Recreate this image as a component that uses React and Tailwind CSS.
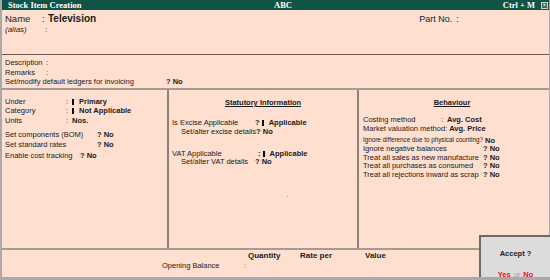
import React from "react";

const sans = { fontFamily: '"Liberation Sans", Arial, sans-serif' };

const Row = ({ label, sep, value, labelW, className = "" }) => (
  <div className={`flex items-center leading-none whitespace-nowrap ${className}`}>
    <span className={labelW}>{label}</span>
    <span className="w-[6px]">{sep}</span>
    <span className="font-bold">{value}</span>
  </div>
);

const Blk = () => <span className="inline-block w-[2px] h-[6px] bg-black mr-[5px] align-middle" />;

export default function App() {
  return (
    <div
      className="w-[550px] h-[280px] bg-[#a9a9a9] pl-[2px] pr-[1px] pb-[3px] flex flex-col relative text-[8px] text-[#1a1a1a] overflow-hidden"
      style={sans}
    >
      {/* title bar */}
      <div
        className="h-[10px] bg-[#0f5446] text-white font-bold text-[8.5px] flex items-center pl-[6px] pr-[1px] leading-none"
        style={{ fontFamily: '"Liberation Serif", "Times New Roman", serif' }}
      >
        <span className="w-[266px]">Stock Item Creation</span>
        <span className="flex-1">ABC</span>
        <span className="mr-[6px]">Ctrl + M</span>
        <span className="w-[7px] h-[7px] border border-[#cfcfcf] bg-[#3c6a5e] text-[6px] flex items-center justify-center">×</span>
      </div>

      <div className="flex-1 bg-[#fedfd0] flex flex-col">
        {/* name block */}
        <div className="h-[45px] border-b border-[#6e5a52] pl-[3px] pt-[4px]">
          <div className="flex items-center leading-none text-[9.5px]">
            <span className="w-[37px]">Name</span>
            <span className="w-[6px]">:</span>
            <span className="font-bold text-[10px]">Television</span>
            <span className="ml-[323px] text-[9px]">Part No.</span>
            <span className="ml-[4px]">:</span>
          </div>
          <div className="flex items-center leading-none mt-[2px] text-[8px]">
            <span className="w-[40px] italic">(alias)</span>
            <span>:</span>
          </div>
        </div>

        {/* description block */}
        <div className="h-[33px] pl-[3px] pt-[4px] flex flex-col gap-[2px] text-[7.5px]">
          <Row label="Description" sep=":" value="" labelW="w-[41px]" />
          <Row label="Remarks" sep=":" value="" labelW="w-[41px]" />
          <div className="flex items-center leading-none">
            <span className="w-[161px]">Set/modify default ledgers for invoicing</span>
            <span className="font-bold">? No</span>
          </div>
        </div>
        <div className="h-[2px] bg-[#a59a94]" />

        {/* columns */}
        <div className="flex-1 flex">
          <div className="w-[167px] border-r-2 border-[#8d807a] pl-[3px] pt-[8px] text-[7.5px]">
            <Row label="Under" sep=":" value={<><Blk />Primary</>} labelW="w-[61px]" />
            <Row label="Category" sep=":" value={<><Blk />Not Applicable</>} labelW="w-[61px]" className="mt-[1px]" />
            <Row label="Units" sep=":" value="Nos." labelW="w-[61px]" className="mt-[3px]" />
            <Row label="Set components (BOM)" sep="" value="? No" labelW="w-[86px]" className="mt-[6px]" />
            <Row label="Set standard rates" sep="" value="? No" labelW="w-[86px]" className="mt-[3px]" />
            <Row label="Enable cost tracking" sep="" value="? No" labelW="w-[69px]" className="mt-[3px]" />
          </div>

          <div className="w-[190px] border-r-2 border-[#8d807a] pl-[3px] pt-[9px] text-[7.5px] relative">
            <div className="text-center font-bold underline leading-none pr-[3px]">Statutory Information</div>
            <div className="flex items-center leading-none mt-[12px] whitespace-nowrap">
              <span className="w-[83px]">Is Excise Applicable</span>
              <span className="font-bold">? <Blk />Applicable</span>
            </div>
            <div className="flex items-center leading-none mt-[2px] pl-[9px] whitespace-nowrap">
              <span>Set/alter excise details</span>
              <span className="font-bold">? No</span>
            </div>
            <div className="flex items-center leading-none mt-[14px] whitespace-nowrap">
              <span className="w-[86px]">VAT Applicable</span>
              <span className="font-bold">: <Blk />Applicable</span>
            </div>
            <div className="flex items-center leading-none mt-[1px] pl-[9px] whitespace-nowrap">
              <span className="w-[74px]">Set/alter VAT details</span>
              <span className="font-bold">? No</span>
            </div>
            <span className="absolute left-[118px] top-[106px] w-[1px] h-[1px] bg-[#999]" />
          </div>

          <div className="flex-1 pl-[4px] pt-[9px] text-[7.5px]">
            <div className="text-center font-bold underline leading-none pr-[8px]">Behaviour</div>
            <Row label="Costing method" sep=":" value="Avg. Cost" labelW="w-[78px]" className="mt-[9px]" />
            <div className="flex items-center leading-none mt-[1.5px] whitespace-nowrap">
              <span>Market valuation method:</span>
              <span className="font-bold ml-[2px]">Avg. Price</span>
            </div>
            <div className="flex items-center leading-none mt-[4.5px] whitespace-nowrap">
              <span className="text-[6.3px] mr-[2px]">Ignore difference due to physical counting?</span>
              <span className="font-bold">No</span>
            </div>
            {[
              "Ignore negative balances",
              "Treat all sales as new manufacture",
              "Treat all purchases as consumed",
              "Treat all rejections inward as scrap",
            ].map((t) => (
              <div key={t} className="flex items-center leading-none mt-[1px] whitespace-nowrap">
                <span className="w-[120px]">{t}</span>
                <span className="font-bold">? No</span>
              </div>
            ))}
          </div>
        </div>

        {/* opening balance */}
        <div className="h-[29px] border-t-2 border-[#a59a94] text-[7.5px]">
          <div className="flex items-center leading-none font-bold text-[8px] pt-[2px] pl-[246px]">
            <span className="w-[52px]">Quantity</span>
            <span className="w-[65px]">Rate per</span>
            <span>Value</span>
          </div>
          <div className="flex items-center leading-none pl-[160px] mt-[2px]">
            <span className="w-[82px]">Opening Balance</span>
            <span className="text-[#777]">:</span>
          </div>
        </div>
      </div>

      {/* accept box */}
      <div className="absolute right-[0px] bottom-[3px] w-[71px] h-[42px] bg-[#dcdcdc] border-t-2 border-l-2 border-[#6a6a6a] flex flex-col items-center text-[7.5px] leading-none">
        <div className="mt-[13px] font-bold text-[#222]">Accept ?</div>
        <div className="mt-[13px] font-bold">
          <span className="text-[#ee1111]">Yes</span>
          <span className="text-[#a0a0a0] font-normal mx-[3px]">or</span>
          <span className="text-[#ee1111]">No</span>
        </div>
      </div>
    </div>
  );
}
